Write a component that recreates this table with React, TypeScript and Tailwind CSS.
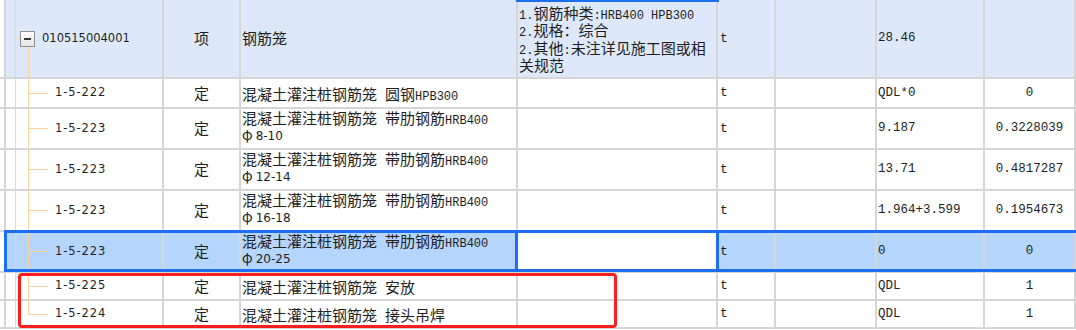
import type { ReactNode } from 'react';

const cn = "font-['Noto_Sans_CJK_SC',sans-serif]";
const mono = "font-['Liberation_Mono',monospace]";
const sans = "font-['DejaVu_Sans',sans-serif]";
const cols = 'grid grid-cols-[6px_158px_77px_277px_200px_58px_101px_108px_91px_1fr]';
const cell = 'border-r-2 border-b-2 border-[#d6d6d6]';
const small = "font-['Liberation_Mono',monospace] text-[12px] leading-none";

interface Item {
  code: string;
  rest: string;
  latin?: string;
  sub?: string;
  expr: string;
  qty: string;
  h: string;
  selected?: boolean;
  last?: boolean;
}

const items: Item[] = [
  { code: '1-5-222', rest: '圆钢', latin: 'HPB300', expr: 'QDL*0', qty: '0', h: 'h-[30px]' },
  { code: '1-5-223', rest: '带肋钢筋', latin: 'HRB400', sub: '8-10', expr: '9.187', qty: '0.3228039', h: 'h-[41px]' },
  { code: '1-5-223', rest: '带肋钢筋', latin: 'HRB400', sub: '12-14', expr: '13.71', qty: '0.4817287', h: 'h-[41px]' },
  { code: '1-5-223', rest: '带肋钢筋', latin: 'HRB400', sub: '16-18', expr: '1.964+3.599', qty: '0.1954673', h: 'h-[41px]' },
  { code: '1-5-223', rest: '带肋钢筋', latin: 'HRB400', sub: '20-25', expr: '0', qty: '0', h: 'h-[41px]', selected: true },
  { code: '1-5-225', rest: '安放', expr: 'QDL', qty: '1', h: 'h-[28px]' },
  { code: '1-5-224', rest: '接头吊焊', expr: 'QDL', qty: '1', h: 'h-[28px]', last: true },
];

function TreeChild({ code, last }: { code: string; last?: boolean }) {
  return (
    <div className="flex h-full items-stretch">
      <div className="w-[9px]" />
      <div className="w-px bg-[#fdd49c]" />
      <div className="w-[12px]" />
      <div className="flex w-[20px] flex-col">
        <div className="flex-1 border-l border-[#fdd49c]" />
        <div className="h-px bg-[#fdd49c]" />
        <div className={`flex-1 border-l ${last ? 'border-transparent' : 'border-[#fdd49c]'}`} />
      </div>
      <span className={`${sans} ml-[7px] self-center text-[11.5px] tracking-[0.9px]`}>{code}</span>
    </div>
  );
}

function Line({ children, className = '' }: { children?: ReactNode; className?: string }) {
  return <div className={`${cell} ${className}`}>{children}</div>;
}

export default function App() {
  return (
    <div className="relative h-[330px] w-[1076px] overflow-hidden bg-white text-[#1e1e1e]">
      {/* parent row */}
      <div className={`${cols} h-[79px]`}>
        <Line className="bg-white" />
        <Line className="bg-[#dde9fb]">
          <div className="flex h-full items-stretch">
            <div className="w-[9px]" />
            <div className="w-px bg-[#fdd49c]" />
            <div className="flex w-[20px] flex-col">
              <div className="flex-1" />
              <div className="flex items-center">
                <div className="h-px w-[4px] bg-[#fdd49c]" />
                <div className="flex h-[16px] w-[15px] items-center justify-center border border-[#8f8f8f] bg-gradient-to-b from-white to-[#e4e4e4]">
                  <div className="h-[2px] w-[7px] bg-[#333]" />
                </div>
              </div>
              <div className="ml-[12px] flex-1 border-l border-[#fdd49c]" />
            </div>
            <span className={`${sans} ml-[6px] self-center text-[11.5px]`}>010515004001</span>
          </div>
        </Line>
        <Line className={`${cn} flex items-center justify-center bg-[#dde9fb] text-[15px]`}>项</Line>
        <Line className={`${cn} flex items-center bg-[#dde9fb] pl-[1px] text-[15px]`}>钢筋笼</Line>
        <Line className={`${cn} bg-[#dde9fb] pl-[1px] pt-[4px] text-[15px] leading-[17px]`}>
          <div className="h-[17.3px] whitespace-nowrap">
            <span className={small}>1.</span>钢筋种类<span className={small}>:HRB400 HPB300</span>
          </div>
          <div className="h-[17.3px] whitespace-nowrap">
            <span className={small}>2.</span>规格：综合
          </div>
          <div className="h-[17.3px] whitespace-nowrap">
            <span className={small}>2.</span>其他<span className={small}>:</span>未注详见施工图或相
          </div>
          <div className="h-[17.3px] whitespace-nowrap">关规范</div>
        </Line>
        <Line className={`${mono} flex items-center bg-[#dde9fb] pl-[2px] text-[13px]`}>t</Line>
        <Line className="bg-[#dde9fb]" />
        <Line className={`${mono} flex items-center bg-[#dde9fb] pl-[1px] text-[12.5px]`}>28.46</Line>
        <Line className="bg-[#dde9fb]" />
        <Line className="bg-[#dde9fb]" />
      </div>

      {items.map((it, i) => {
        const bg = it.selected ? 'bg-[#b6d5fc]' : 'bg-white';
        return (
          <div key={i} className={`${cols} ${it.h}`}>
            <Line className="bg-white" />
            <Line className={bg}>
              <TreeChild code={it.code} last={it.last} />
            </Line>
            <Line className={`${cn} ${bg} flex items-center justify-center text-[15px]`}>定</Line>
            <Line className={`${cn} ${bg} flex flex-col pl-[1px] text-[15px] leading-[17px] ${it.sub ? 'justify-start' : 'justify-center'}`}>
              <div className="flex h-[17px] items-baseline whitespace-nowrap">
                <span>混凝土灌注桩钢筋笼</span>
                <span className="ml-[8px]">{it.rest}</span>
                {it.latin && <span className={`${mono} text-[12px]`}>{it.latin}</span>}
              </div>
              {it.sub && (
                <div className="flex h-[17px] items-baseline">
                  <span className="text-[14px]">φ</span>
                  <span className={`${sans} ml-[3px] text-[12px]`}>{it.sub}</span>
                </div>
              )}
            </Line>
            <Line className="bg-white" />
            <Line className={`${mono} ${bg} flex items-center pl-[2px] text-[13px]`}>t</Line>
            <Line className={bg} />
            <Line className={`${mono} ${bg} flex items-center pl-[1px] text-[12.5px]`}>{it.expr}</Line>
            <Line className={`${mono} ${bg} flex items-center justify-center text-[12.5px]`}>{it.qty}</Line>
            <Line className={bg} />
          </div>
        );
      })}

      {/* active cell edge from the row above */}
      <div className="absolute left-[516px] top-0 h-[2px] w-[203px] bg-[#1c6ef2]" />
      {/* selected row */}
      <div className="pointer-events-none absolute left-[4px] top-[230px] h-[42px] w-[1080px] border-[3px] border-[#1c6ef2]" />
      <div className="pointer-events-none absolute left-[515px] top-[230px] h-[42px] w-[204px] border-[3px] border-[#1c6ef2]" />
      {/* annotation */}
      <div className="pointer-events-none absolute left-[18px] top-[273px] h-[55px] w-[599px] rounded-[4px] border-[3px] border-[#ff1e1e]" />
    </div>
  );
}
